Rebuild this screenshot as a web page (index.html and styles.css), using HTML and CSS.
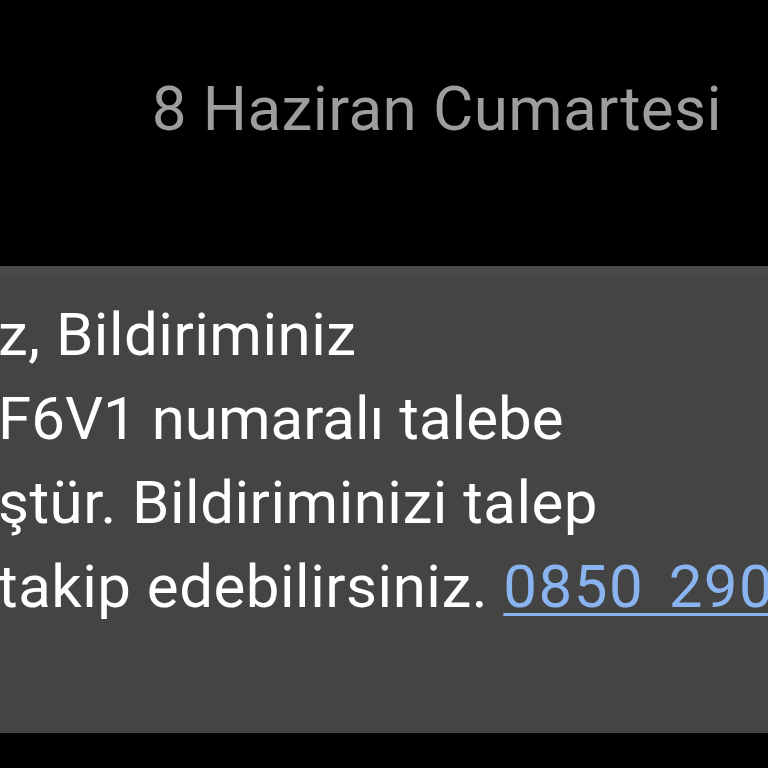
FILE: index.html
```html
<!DOCTYPE html>
<html lang="tr">
<head>
<meta charset="utf-8">
<link rel="stylesheet" href="styles.css">
</head>
<body>
<div class="screen">
  <header class="date">8 Haziran Cumartesi</header>
  <section class="bubble">
    <div class="msg">
      <div class="line">z, Bildiriminiz</div>
      <div class="line tight">F6V1 numaralı talebe</div>
      <div class="line">ştür. Bildiriminizi talep</div>
      <div class="line">takip edebilirsiniz. <a class="link" href="#">0850 290 00 00</a></div>
    </div>
  </section>
</div>
</body>
</html>
```
FILE: styles.css
```css
html, body {
  margin: 0;
  padding: 0;
  background: #000;
  width: 768px;
  height: 768px;
  overflow: hidden;
}
.screen {
  width: 768px;
  height: 768px;
  display: flex;
  flex-direction: column;
  font-family: Roboto, "Noto Sans", sans-serif;
}
.date {
  height: 266px;
  box-sizing: border-box;
  padding-top: 69px;
  padding-right: 46px;
  text-align: right;
  font-size: 62px;
  line-height: 80px;
  letter-spacing: 0.4px;
  color: #9d9d9d;
  white-space: nowrap;
}
.bubble {
  height: 467px;
  box-sizing: border-box;
  background: #444444;
  border-top: 10px solid #4a4a4a;
  padding-top: 17px;
  overflow: hidden;
}
.msg {
  margin-left: -2px;
  color: #ffffff;
  font-size: 60px;
  line-height: 84px;
  letter-spacing: 0.5px;
  white-space: nowrap;
}
.tight {
  letter-spacing: 0;
}
.link {
  color: #8ab4f0;
  text-decoration: underline;
  text-decoration-thickness: 3px;
  text-underline-offset: 6px;
  letter-spacing: 1.5px;
  word-spacing: 8px;
}
```
